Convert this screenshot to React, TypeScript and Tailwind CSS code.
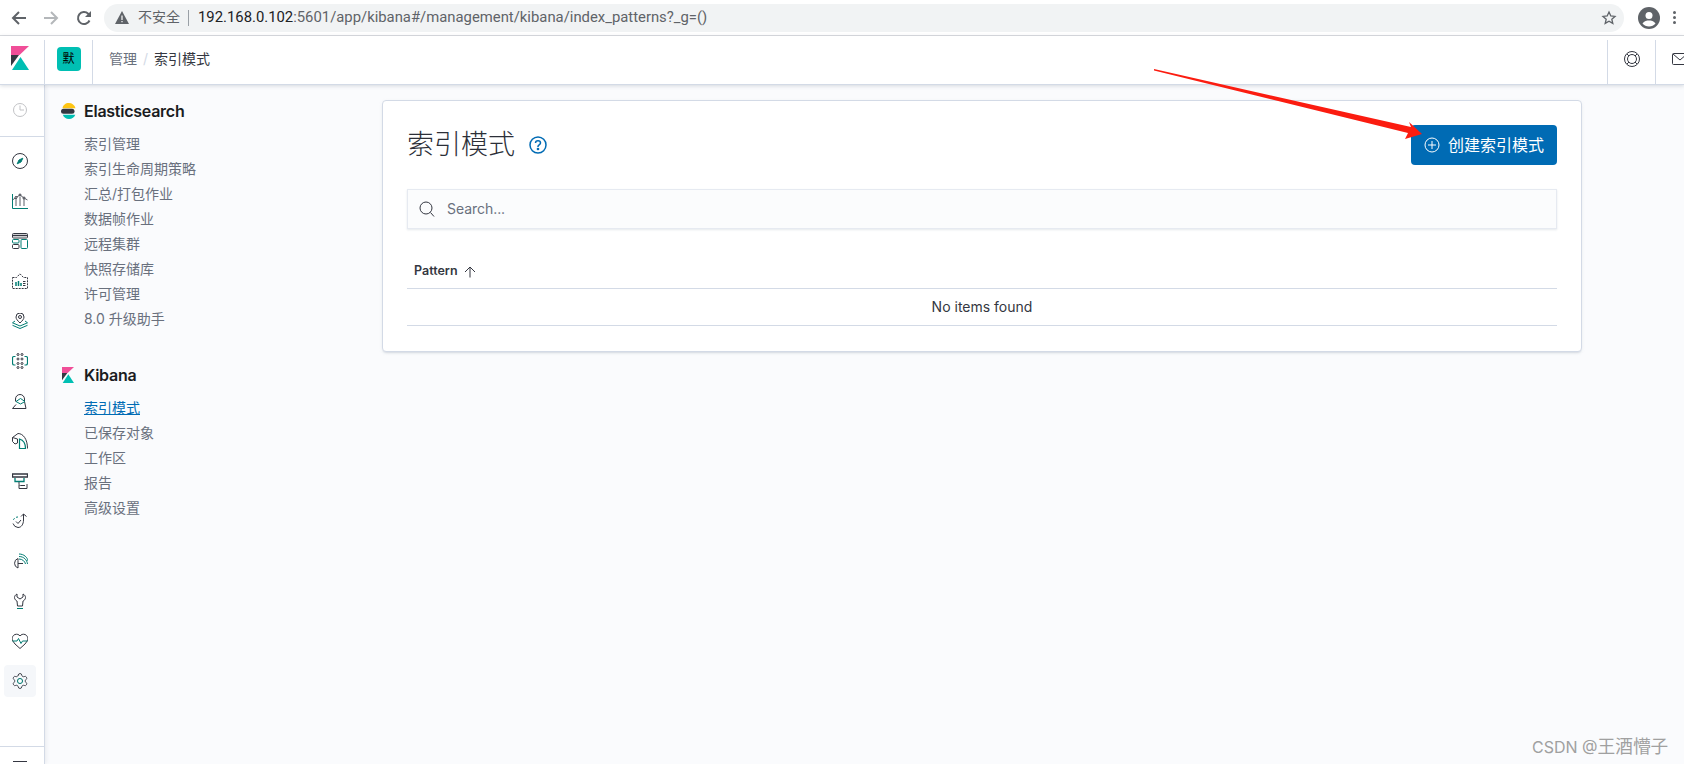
import { ReactElement, ReactNode } from 'react'
import { Settings } from 'lucide-react'

const ui = 'font-["Inter","Noto_Sans_CJK_SC",sans-serif]'

const Icon = ({ children, size = 16 }: { children: ReactNode; size?: number }): ReactElement => (
	<svg width={size} height={size} viewBox="0 0 16 16" fill="none" stroke="#343741" strokeWidth="1">
		{children}
	</svg>
)

const TEAL = '#017d73'

const navIcons: ReactNode[] = [
	<>
		<circle cx="8" cy="8" r="7.5" />
		<path d="M10.8 5.2 9 9 5.2 10.8 7 7Z" fill={TEAL} stroke={TEAL} />
	</>,
	<>
		<path d="M.5 1v14.5H16" stroke={TEAL} />
		<path d="M4 5v8M8 4v9M12 6v7" strokeWidth=".8" />
		<path d="M.5 7 4 4.500 8 2l4 3 3.500 2" strokeWidth=".8" />
		<circle cx="4" cy="4.500" r="1" fill="#fff" />
		<circle cx="8" cy="2" r="1" fill="#fff" />
		<circle cx="12" cy="5" r="1" fill="#fff" />
	</>,
	<>
		<rect x=".5" y=".5" width="15" height="4.500" rx="1" />
		<path d="M.5 2.500h15" strokeWidth="1.500" />
		<rect x=".5" y="6.500" width="6.500" height="3.500" rx="1" stroke={TEAL} />
		<rect x=".5" y="11.500" width="6.500" height="4" rx="1" />
		<rect x="9" y="6.500" width="6.500" height="9" rx="1" stroke={TEAL} />
	</>,
	<>
		<path d="M.5 4.500h4L8 .8l3.500 3.700h4v11H.5Z" strokeDasharray="2 1" />
		<path d="M4 9v4M6.500 8v5M9 10v3" stroke={TEAL} strokeWidth="1.500" />
		<path d="M11 8.500h2.500M11 10.500h2.500M11 12.500h2.500" />
	</>,
	<>
		<path d="M8 10C5.500 7.500 4 6 4 4a4 4 0 0 1 8 0c0 2-1.500 3.500-4 6Z" />
		<circle cx="8" cy="4" r="1.500" />
		<path d="M3 8 .5 9.800 8 13l7.500-3.200L13 8" stroke={TEAL} />
		<path d="M.5 12.300 8 15.500l7.500-3.200" stroke={TEAL} />
	</>,
	<>
		<circle cx="6" cy="1.500" r="1" />
		<circle cx="10" cy="1.500" r="1" />
		<circle cx="6" cy="6" r="1" />
		<circle cx="10" cy="6" r="1" />
		<circle cx="6" cy="10.500" r="1" />
		<circle cx="10" cy="10.500" r="1" />
		<circle cx="6" cy="14.500" r="1" />
		<circle cx="10" cy="14.500" r="1" />
		<path d="M3.500 3.500H2C1 3.500.5 4 .5 5v5c0 1 .5 2 1.500 2h1.500M12.500 3.500H14c1 0 1.500.5 1.500 1.500v5c0 1-.5 2-1.500 2h-1.500" stroke={TEAL} strokeWidth="1.200" />
	</>,
	<>
		<path d="M3.500 8.500V6a4.500 4.500 0 0 1 9 0v2.500l1.500 7H.5l3.500-4" />
		<path d="M4 8.500 8.500 5.500l4.500 3-4.500 2.500Z" stroke={TEAL} />
	</>,
	<>
		<path d="M.5 4.500 6 .5c5 0 9.500 5.500 9.500 15" />
		<path d="M.5 4.500 5.500 6v4L3 11 .5 8.500Z" />
		<path d="M7.500 15.500V6c3.500 1 6 4.500 6 9.500Z" stroke={TEAL} strokeWidth="1.200" />
	</>,
	<>
		<path d="M.5 1h15v3H.5Z" strokeWidth="1.300" />
		<path d="M3 5v3.500h9V5" stroke={TEAL} strokeWidth="1.300" />
		<path d="M7 9v2c0 1 .5 1.500 1.500 1.500h4.500M7 12v3.500h8V11" />
	</>,
	<>
		<path d="M11.500 1v6c0 4-2 7.500-5.500 7.500a5.800 5.800 0 0 1-5-4" />
		<path d="M9 3.500 11.500 1 14.500 3.500" />
		<path d="M6 4a5 5 0 0 0-5 4" stroke={TEAL} strokeDasharray="2 1.500" />
		<path d="m4 8.500 2 2 3-3.500" />
	</>,
	<>
		<path d="M6 7.500V15A5 5 0 0 1 6 5.500Z" />
		<path d="M6 10.500h5" />
		<path d="M7 6c3.500 0 6 2.500 6.500 5M7 3.500c5 0 8 3.500 8.500 7.500M7 1c5 0 8.500 3.500 9 7" stroke={TEAL} />
	</>,
	<>
		<path d="M5 1v3l3 2 3-2V1c2 1 2.500 2.500 2.500 3.500 0 2-1.500 3-2.500 3.500l-.5 5h-5l-.5-5C4 7.500 2.500 6.500 2.500 4.500 2.500 3.500 3 2 5 1Z" />
		<path d="M5 15.500h6" stroke={TEAL} />
	</>,
	<>
		<path d="M3 11 .8 8C-.5 5.800.3 2.500 3 1.500c2-.7 4 0 5 1.500 1-1.500 3-2.200 5-1.500 2.700 1 3.500 4.300 2.200 6.500L13 11l-5 4.500Z" />
		<path d="M.5 8H5l1.500-2.500L9 10.500l1.500-2.500h5" stroke={TEAL} fill="#fff" />
	</>,
]

const GearIcon = (): ReactElement => (
	<span className="relative flex size-[18px] items-center justify-center">
		<Settings size={18} strokeWidth={1.200} color="#343741" />
		<span className="absolute size-[6px] rounded-full border border-[#017d73] bg-white" />
	</span>
)

const KibanaLogo = ({ width, height }: { width: number; height: number }): ReactElement => (
	<svg width={width} height={height} viewBox="0 0 18 24">
		<path d="M0 0H18L8.500 9H0Z" fill="#f04e98" />
		<path d="M0 9H8L0 20Z" fill="#343741" />
		<path d="M9.500 11 18 24H1Z" fill="#00bfb3" />
	</svg>
)

const ElasticLogo = (): ReactElement => (
	<svg width="15" height="16" viewBox="0 0 15 16">
		<path d="M1.500 5.300C2 2 4.500 0 7.800 0S13.700 2 14.500 5.300Z" fill="#fec514" />
		<rect x="0" y="5.800" width="13.500" height="5" rx="2.500" fill="#343741" />
		<path d="M1.800 11.800H14.300C13.500 14.500 11 16 8 16S2.600 14.500 1.800 11.800Z" fill="#00bfb3" />
	</svg>
)

const BrowserBar = (): ReactElement => (
	<div className="flex h-[36px] items-center border-b border-[#dadce0] bg-white font-['Roboto','Noto_Sans_CJK_SC',sans-serif]">
		<div className="flex w-[104px] shrink-0 items-center pl-[11px]">
			<svg width="16" height="16" viewBox="0 0 16 16" fill="none" stroke="#5f6368" strokeWidth="2"><path d="M15 8H2M8 2 2 8l6 6" /></svg>
			<svg className="ml-[16px]" width="16" height="16" viewBox="0 0 16 16" fill="none" stroke="#b4b7ba" strokeWidth="2"><path d="M1 8h13M8 2l6 6-6 6" /></svg>
			<svg className="ml-[17px]" width="16" height="16" viewBox="0 0 16 16" fill="none" stroke="#5f6368" strokeWidth="2">
				<path d="M13.500 10.500A6 6 0 1 1 12.200 3.800L14 5.500" />
				<path d="M15 1v6H9Z" fill="#5f6368" stroke="none" />
			</svg>
		</div>
		<div className="flex h-[28px] w-[1520px] shrink-0 items-center rounded-full bg-[#f1f3f4] pl-[11px] pr-[7px] text-[14px]">
			<svg width="14" height="13" viewBox="0 0 14 13"><path d="M7 0 14 13H0Z" fill="#5f6368" /><path d="M6.400 4.500h1.200v4.500H6.400ZM6.400 10h1.200v1.300H6.400Z" fill="#fff" /></svg>
			<span className="ml-[9px] text-[#5f6368]">不安全</span>
			<span className="ml-[8px] h-[16px] w-px bg-[#9aa0a6]" />
			<span className="ml-[9px] text-[14.850px] text-[#202124]">192.168.0.102<span className="text-[#5f6368]">:5601/app/kibana#/management/kibana/index_patterns?_g=()</span></span>
			<svg className="ml-auto" width="16" height="16" viewBox="0 0 16 16" fill="none" stroke="#5f6368" strokeWidth="1.300"><path d="m8 2 1.800 4 4.200.4-3.200 2.800 1 4.200L8 11.200l-3.800 2.200 1-4.200L2 6.400 6.200 6Z" /></svg>
		</div>
		<svg className="ml-[14px] shrink-0" width="22" height="22" viewBox="0 0 22 22">
			<circle cx="11" cy="11" r="11" fill="#5f6368" />
			<circle cx="11" cy="8.500" r="3.500" fill="#fff" />
			<path d="M4.500 16.500C6 14 9 13.500 11 13.500s5 .5 6.500 3C16 18.500 13.500 19.500 11 19.500s-5-1-6.500-3Z" fill="#fff" />
		</svg>
		<div className="ml-[13px] flex shrink-0 flex-col gap-[2px]">
			<span className="size-[3px] rounded-full bg-[#5f6368]" />
			<span className="size-[3px] rounded-full bg-[#5f6368]" />
			<span className="size-[3px] rounded-full bg-[#5f6368]" />
		</div>
	</div>
)

const KibanaHeader = (): ReactElement => (
	<div className="relative z-10 flex h-[49px] shrink-0 items-stretch border-b border-[#d3dae6] bg-white pt-[4px] shadow-[0_1px_4px_rgba(65,78,101,0.2)]">
		<div className="flex w-[44px] shrink-0 justify-center pr-[4px] pt-[7px]">
			<div className="-mt-[1px]"><KibanaLogo width={18} height={24} /></div>
		</div>
		<div className="flex w-[48px] shrink-0 items-center justify-center border-l border-[#d3dae6]">
			<div className="-mt-[7px] flex size-[24px] items-center justify-center rounded-[4px] bg-[#00bfb3] text-[12px] text-black">默</div>
		</div>
		<div className="flex items-center border-l border-[#d3dae6] pb-[7px] pl-[16px] text-[14px]">
			<span className="text-[#69707d]">管理</span>
			<span className="mx-[6px] text-[#d3dae6]">/</span>
			<span className="text-[#343741]">索引模式</span>
		</div>
		<div className="ml-auto flex w-[48px] shrink-0 items-center justify-center border-l border-[#d3dae6] pb-[7px]">
			<Icon>
				<circle cx="8" cy="8" r="7.500" />
				<circle cx="8" cy="8" r="4.500" />
				<path d="m3 3 2 2M13 3l-2 2M3 13l2-2M13 13l-2-2" />
			</Icon>
		</div>
		<div className="flex w-[29px] shrink-0 items-center border-l border-[#d3dae6] pb-[7px] pl-[16px]">
			<svg className="shrink-0" width="16" height="16" viewBox="0 0 16 16" fill="none" stroke="#343741"><rect x=".5" y="2.500" width="15" height="11" rx="1" /><path d="m1 3 7 6 7-6" /></svg>
		</div>
	</div>
)

const SideNav = (): ReactElement => (
	<div className="relative flex w-[45px] shrink-0 flex-col border-r border-[#d3dae6] bg-white shadow-[1px_0_4px_rgba(65,78,101,0.1)]">
		<div className="flex h-[52px] shrink-0 items-center justify-center border-b border-[#d3dae6] pb-[2px] pr-[4px]">
			<svg width="16" height="16" viewBox="0 0 16 16" fill="none" stroke="#c2c3c6"><circle cx="8" cy="8" r="6.500" /><path d="M8 3.500V8h4" /></svg>
		</div>
		<div className="flex flex-col items-center pr-[4px] pt-[4px]">
			{navIcons.map((icon, i) => (
				<div key={i} className="flex h-[40px] w-full items-center justify-center"><Icon>{icon}</Icon></div>
			))}
			<div className="mt-[4px] flex size-[32px] items-center justify-center rounded-[4px] bg-[#f5f7fa]"><GearIcon /></div>
		</div>
		<div className="mt-auto flex h-[18px] shrink-0 justify-center border-t border-[#d3dae6] pr-[4px] pt-[14px]">
			<span className="h-px w-[14px] bg-[#343741]" />
		</div>
	</div>
)

interface SectionProps {
	logo: ReactNode
	title: string
	items: string[]
	active?: string
}

const Section = ({ logo, title, items, active }: SectionProps): ReactElement => (
	<div>
		<div className="flex h-[24px] items-center">
			<div className="flex w-[23px] shrink-0">{logo}</div>
			<span className="text-[16px] font-semibold tracking-[-0.25px] text-[#1a1c21]">{title}</span>
		</div>
		<div className="mt-[8px] pl-[23px]">
			{items.map(item => (
				<div
					key={item}
					className={item === active ? 'h-[25px] text-[14px] leading-[25px] text-[#006bb4] underline' : 'h-[25px] text-[14px] leading-[25px] text-[#69707d]'}
				>
					{item}
				</div>
			))}
		</div>
	</div>
)

const IndexPanel = (): ReactElement => (
	<div className="h-[252px] w-[1200px] rounded-[4px] border border-[#d3dae6] bg-white p-[24px] shadow-[0_2px_2px_-1px_rgba(152,162,179,0.3),0_1px_5px_-2px_rgba(152,162,179,0.3)]">
		<div className="flex h-[40px] items-center justify-between">
			<div className="flex items-center">
				<h1 className="text-[27px] font-light text-[#2c2f38]">索引模式</h1>
				<svg className="ml-[14px]" width="18" height="18" viewBox="0 0 18 18" fill="none" stroke="#006bb4" strokeWidth="1.500">
					<circle cx="9" cy="9" r="8" />
					<path d="M6.500 7C6.500 5.500 7.500 4.800 9 4.800s2.500.9 2.500 2.200c0 1.800-2.500 1.800-2.500 3.500v.5" />
					<circle cx="9" cy="13" r=".6" />
				</svg>
			</div>
			<button className="flex h-[40px] w-[146px] items-center justify-center rounded-[4px] bg-[#006bb4] text-[16px] text-white">
				<svg className="mr-[8px]" width="16" height="16" viewBox="0 0 16 16" fill="none" stroke="#fff"><circle cx="8" cy="8" r="7" /><path d="M8 4v8M4 8h8" /></svg>
				创建索引模式
			</button>
		</div>
		<div className="mt-[24px] flex h-[40px] items-center border border-[#e6eaf1] bg-[#fbfcfd] pl-[11px] shadow-[0_1px_2px_rgba(152,162,179,0.25)]">
			<svg width="16" height="16" viewBox="0 0 16 16" fill="none" stroke="#343741"><circle cx="7" cy="7" r="6" /><path d="m11.500 11.500 3.500 4" /></svg>
			<span className="-mt-[1px] ml-[12px] text-[14px] tracking-[-0.05px] text-[#69707d]">Search...</span>
		</div>
		<div className="mt-[24px] flex h-[36px] items-center border-b border-[#d3dae6] pl-[7px] pt-[2px] text-[12.500px] font-semibold text-[#343741]">
			Pattern
			<svg className="ml-[6px]" width="12" height="12" viewBox="0 0 12 12" fill="none" stroke="#343741"><path d="M6 11.500V1M1 6l5-5 5 5" /></svg>
		</div>
		<div className="flex h-[37px] items-center justify-center border-b border-[#d3dae6] pb-[2px] text-[14px] text-[#343741]">No items found</div>
	</div>
)

export default function App(): ReactElement {
	return (
		<div className={`relative flex h-[764px] w-[1684px] flex-col overflow-hidden bg-[#fafbfd] ${ui}`}>
			<BrowserBar />
			<KibanaHeader />
			<div className="flex min-h-0 flex-1">
				<SideNav />
				<div className="w-[337px] shrink-0 pl-[16px] pt-[14px]">
					<Section
						logo={<ElasticLogo />}
						title="Elasticsearch"
						items={['索引管理', '索引生命周期策略', '汇总/打包作业', '数据帧作业', '远程集群', '快照存储库', '许可管理', '8.0 升级助手']}
					/>
					<div className="mt-[32px]">
						<Section
							logo={<div className="pl-[1px]"><KibanaLogo width={12} height={16} /></div>}
							title="Kibana"
							items={['索引模式', '已保存对象', '工作区', '报告', '高级设置']}
							active="索引模式"
						/>
					</div>
				</div>
				<div className="pt-[15px]">
					<IndexPanel />
				</div>
			</div>
			<svg className="pointer-events-none absolute left-0 top-0 z-20" width="1684" height="764">
				<path d="M1154 69 1411 127 1409 122 1422 134 1405 139 1408 133 1154 70.500Z" fill="#fb1c10" />
			</svg>
			<span className="absolute left-[1532px] top-[734px] z-20 text-[16px] text-[#a0a0a0]">CSDN @<span className="text-[17.700px]">王酒懵子</span></span>
		</div>
	)
}
